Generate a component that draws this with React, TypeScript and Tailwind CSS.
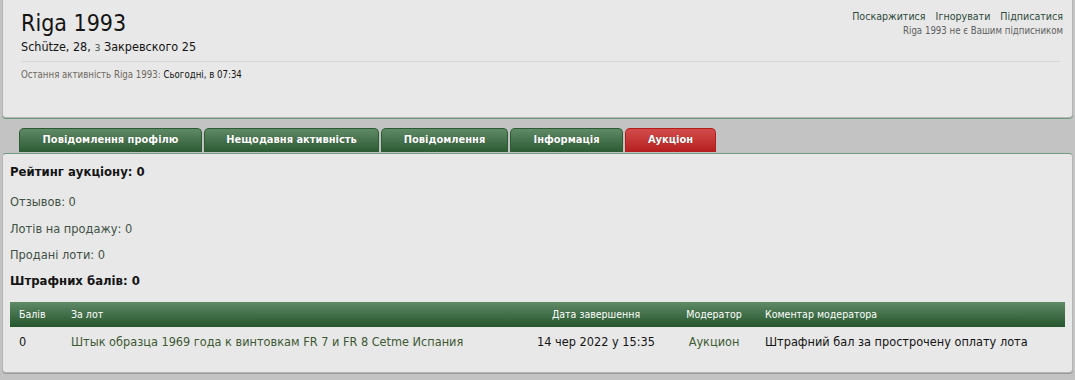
import React from "react";

const tabs = [
  { label: "Повідомлення профілю", w: "w-[183px]" },
  { label: "Нещодавня активність", w: "w-[175px]" },
  { label: "Повідомлення", w: "w-[127px]" },
  { label: "Інформація", w: "w-[113px]" },
  { label: "Аукціон", w: "w-[91px]", active: true },
];

export default function App() {
  return (
    <div className="w-[1075px] h-[380px] bg-[#c3c3c3] overflow-hidden font-['DejaVu_Sans_Condensed','DejaVu_Sans',sans-serif] text-[#141414]">
      {/* profile header */}
      <div className="relative mx-[2px] h-[118px] bg-[#e8e8e8] rounded-b-[4px] border border-t-0 border-[#b5b5b5] shadow-[0_1px_0_#6f9a7c] pl-[18px] pr-[12px]">
        <h1 className="text-[23px] leading-[28px] pt-[9px]">Riga 1993</h1>
        <p className="text-[12.5px] leading-[16px] mt-[2px]">
          Schütze, 28, <span className="text-[#596a5c]">з</span> Закревского 25
        </p>
        <div className="mt-[6px] border-t border-[#d6d6d6] pt-[6px] text-[9.6px] leading-[13px]">
          <span className="text-[#6e675e]">Остання активність Riga 1993:</span> Сьогодні, в 07:34
        </div>
        <div className="absolute right-[9px] top-[9px] text-right">
          <div className="flex gap-[10px] justify-end text-[10.6px] leading-[14px] text-[#2e4a3a]">
            <span>Поскаржитися</span>
            <span>Ігнорувати</span>
            <span>Підписатися</span>
          </div>
          <div className="text-[9.6px] leading-[13px] text-[#5e5e5e] mt-[1px]">Riga 1993 не є Вашим підписником</div>
        </div>
      </div>

      {/* tabs */}
      <div className="flex gap-[2px] pl-[19px] mt-[10px] h-[24px] items-end">
        {tabs.map((t) => (
          <div
            key={t.label}
            className={`${t.w} h-[24px] rounded-t-[5px] border border-b-0 flex items-center justify-center text-white font-bold text-[11px] [text-shadow:0_0_1px_rgba(0,0,0,0.4)] ${
              t.active
                ? "bg-gradient-to-b from-[#d24b4b] to-[#b51d1d] border-[#b51d1d]"
                : "bg-gradient-to-b from-[#5f8a66] to-[#2b5b33] border-[#2b5b33]"
            }`}
          >
            {t.label}
          </div>
        ))}
      </div>

      {/* auction panel */}
      <div className="mx-[2px] mt-[1px] h-[220px] bg-[#e8e8e8] rounded-[4px] border border-[#b5b5b5] border-t-[#6f9a7c] shadow-[0_1px_0_#9a9a9a] px-[7px] pt-[9px]">
        <div className="font-bold text-[13px] leading-[18px]">Рейтинг аукціону: 0</div>
        <div className="text-[12.7px] leading-[16px] text-[#3f5244] mt-[13px]">Отзывов: 0</div>
        <div className="text-[12.7px] leading-[16px] text-[#3f5244] mt-[11px]">Лотів на продажу: 0</div>
        <div className="text-[12.7px] leading-[16px] text-[#3f5244] mt-[10px]">Продані лоти: 0</div>
        <div className="font-bold text-[13px] leading-[18px] mt-[9px]">Штрафних балів: 0</div>

        <table className="w-[1055px] mt-[12px] border-collapse">
          <thead>
            <tr className="h-[25px] bg-gradient-to-b from-[#5f8a66] to-[#24562d] text-white text-[10.5px]">
              <th className="font-normal text-left pl-[9px] w-[61px]">Балів</th>
              <th className="font-normal text-left">За лот</th>
              <th className="font-normal text-center w-[150px]">Дата завершення</th>
              <th className="font-normal text-center w-[86px]">Модератор</th>
              <th className="font-normal text-left pl-[8px] w-[308px]">Коментар модератора</th>
            </tr>
          </thead>
          <tbody>
            <tr className="h-[30px] text-[12.6px]">
              <td className="pl-[9px]">0</td>
              <td className="text-[#3d5a34]">Штык образца 1969 года к винтовкам FR 7 и FR 8 Cetme Испания</td>
              <td className="text-center">14 чер 2022 у 15:35</td>
              <td className="text-center text-[#3d5a34]">Аукцион</td>
              <td className="pl-[8px]">Штрафний бал за прострочену оплату лота</td>
            </tr>
          </tbody>
        </table>
      </div>
    </div>
  );
}
